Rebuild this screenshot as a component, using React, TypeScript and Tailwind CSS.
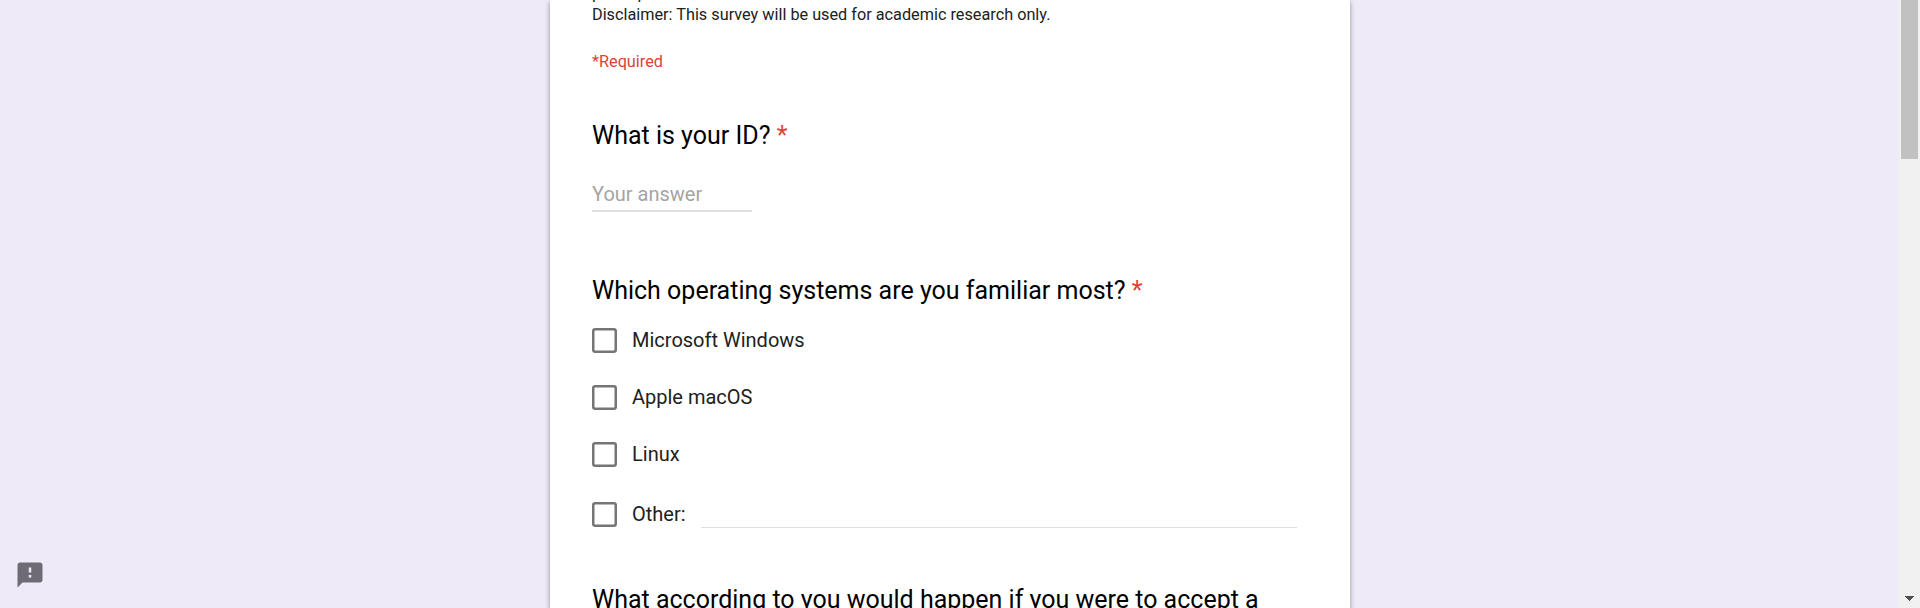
const OPTIONS = [
  { label: 'Microsoft Windows', row: 'mb-8' },
  { label: 'Apple macOS', row: 'mb-8' },
  { label: 'Linux', row: 'mb-[35px]' },
];

function Checkbox() {
  return (
    <svg className="shrink-0" width="25" height="25" viewBox="0 0 25 25" fill="none" stroke="#757575" strokeWidth="2.5">
      <rect x="1.25" y="1.25" width="22.5" height="22.5" rx="2" />
    </svg>
  );
}

function Question({ text, required = false }: { text: string; required?: boolean }) {
  return (
    <h2 className="whitespace-nowrap text-[25px] leading-[34px] text-black">
      {text}
      {required && <span className="text-[#db4437]"> *</span>}
    </h2>
  );
}

function Form() {
  return (
    <main className="h-[608px] w-[800px] overflow-hidden bg-white px-[42px] shadow-[0_2px_5px_rgba(0,0,0,0.4)]">
      <div className="-mt-4 h-[38px] text-[16.25px] leading-5 text-[#212121]">
        <p>participation.</p>
        <p className="mt-px">Disclaimer: This survey will be used for academic research only.</p>
      </div>
      <p className="mt-[30px] text-[16.25px] leading-5 text-[#db4437]">*Required</p>
      <section className="mt-[47px]">
        <Question text="What is your ID?" required />
        <div className="mt-[29px] h-[30px] w-40 border-b-2 border-[#dfdfdf] text-[20px] leading-[25px] text-[#a4a4a4]">
          Your answer
        </div>
      </section>
      <section className="mt-[62px]">
        <Question text="Which operating systems are you familiar most?" required />
        <div className="mt-5 text-[20px] leading-[25px] text-[#212121]">
          {OPTIONS.map((o) => (
            <div key={o.label} className={`flex h-[25px] gap-[15px] ${o.row}`}>
              <Checkbox />
              <span>{o.label}</span>
            </div>
          ))}
          <div className="flex h-[26px] gap-[15px]">
            <Checkbox />
            <span className="w-[54px]">Other:</span>
            <span className="w-[596px] border-b border-[#dfdfdf]" />
          </div>
        </div>
      </section>
      <section className="mt-[55px]">
        <Question text="What according to you would happen if you were to accept a" />
      </section>
    </main>
  );
}

export default function App() {
  return (
    <div className="flex h-[608px] overflow-hidden bg-[#eeeaf8] font-['Roboto',sans-serif]">
      <aside className="flex w-[550px] items-end pb-[18px] pl-[15px]">
        <svg width="30" height="30" viewBox="0 0 24 24" fill="#6f6b75">
          <path d="M20 2H4c-1.100 0-1.990.9-1.990 2L2 22l4-4h14c1.100 0 2-.9 2-2V4c0-1.100-.9-2-2-2zm-7 12h-2v-2h2v2zm0-4h-2V6h2v4z" />
        </svg>
      </aside>
      <Form />
      <div className="flex-1" />
      <div className="flex w-[21px] flex-col items-center justify-between bg-[#f1f1f1] pb-[7px]">
        <div className="h-[159px] w-[17px] bg-[#c1c1c1]" />
        <svg width="9" height="5" viewBox="0 0 9 5" fill="#505050" shapeRendering="crispEdges">
          <path d="M0 0h9v1H8v1H7v1H6v1H5v1H4V4H3V3H2V2H1V1H0z" />
        </svg>
      </div>
    </div>
  );
}
